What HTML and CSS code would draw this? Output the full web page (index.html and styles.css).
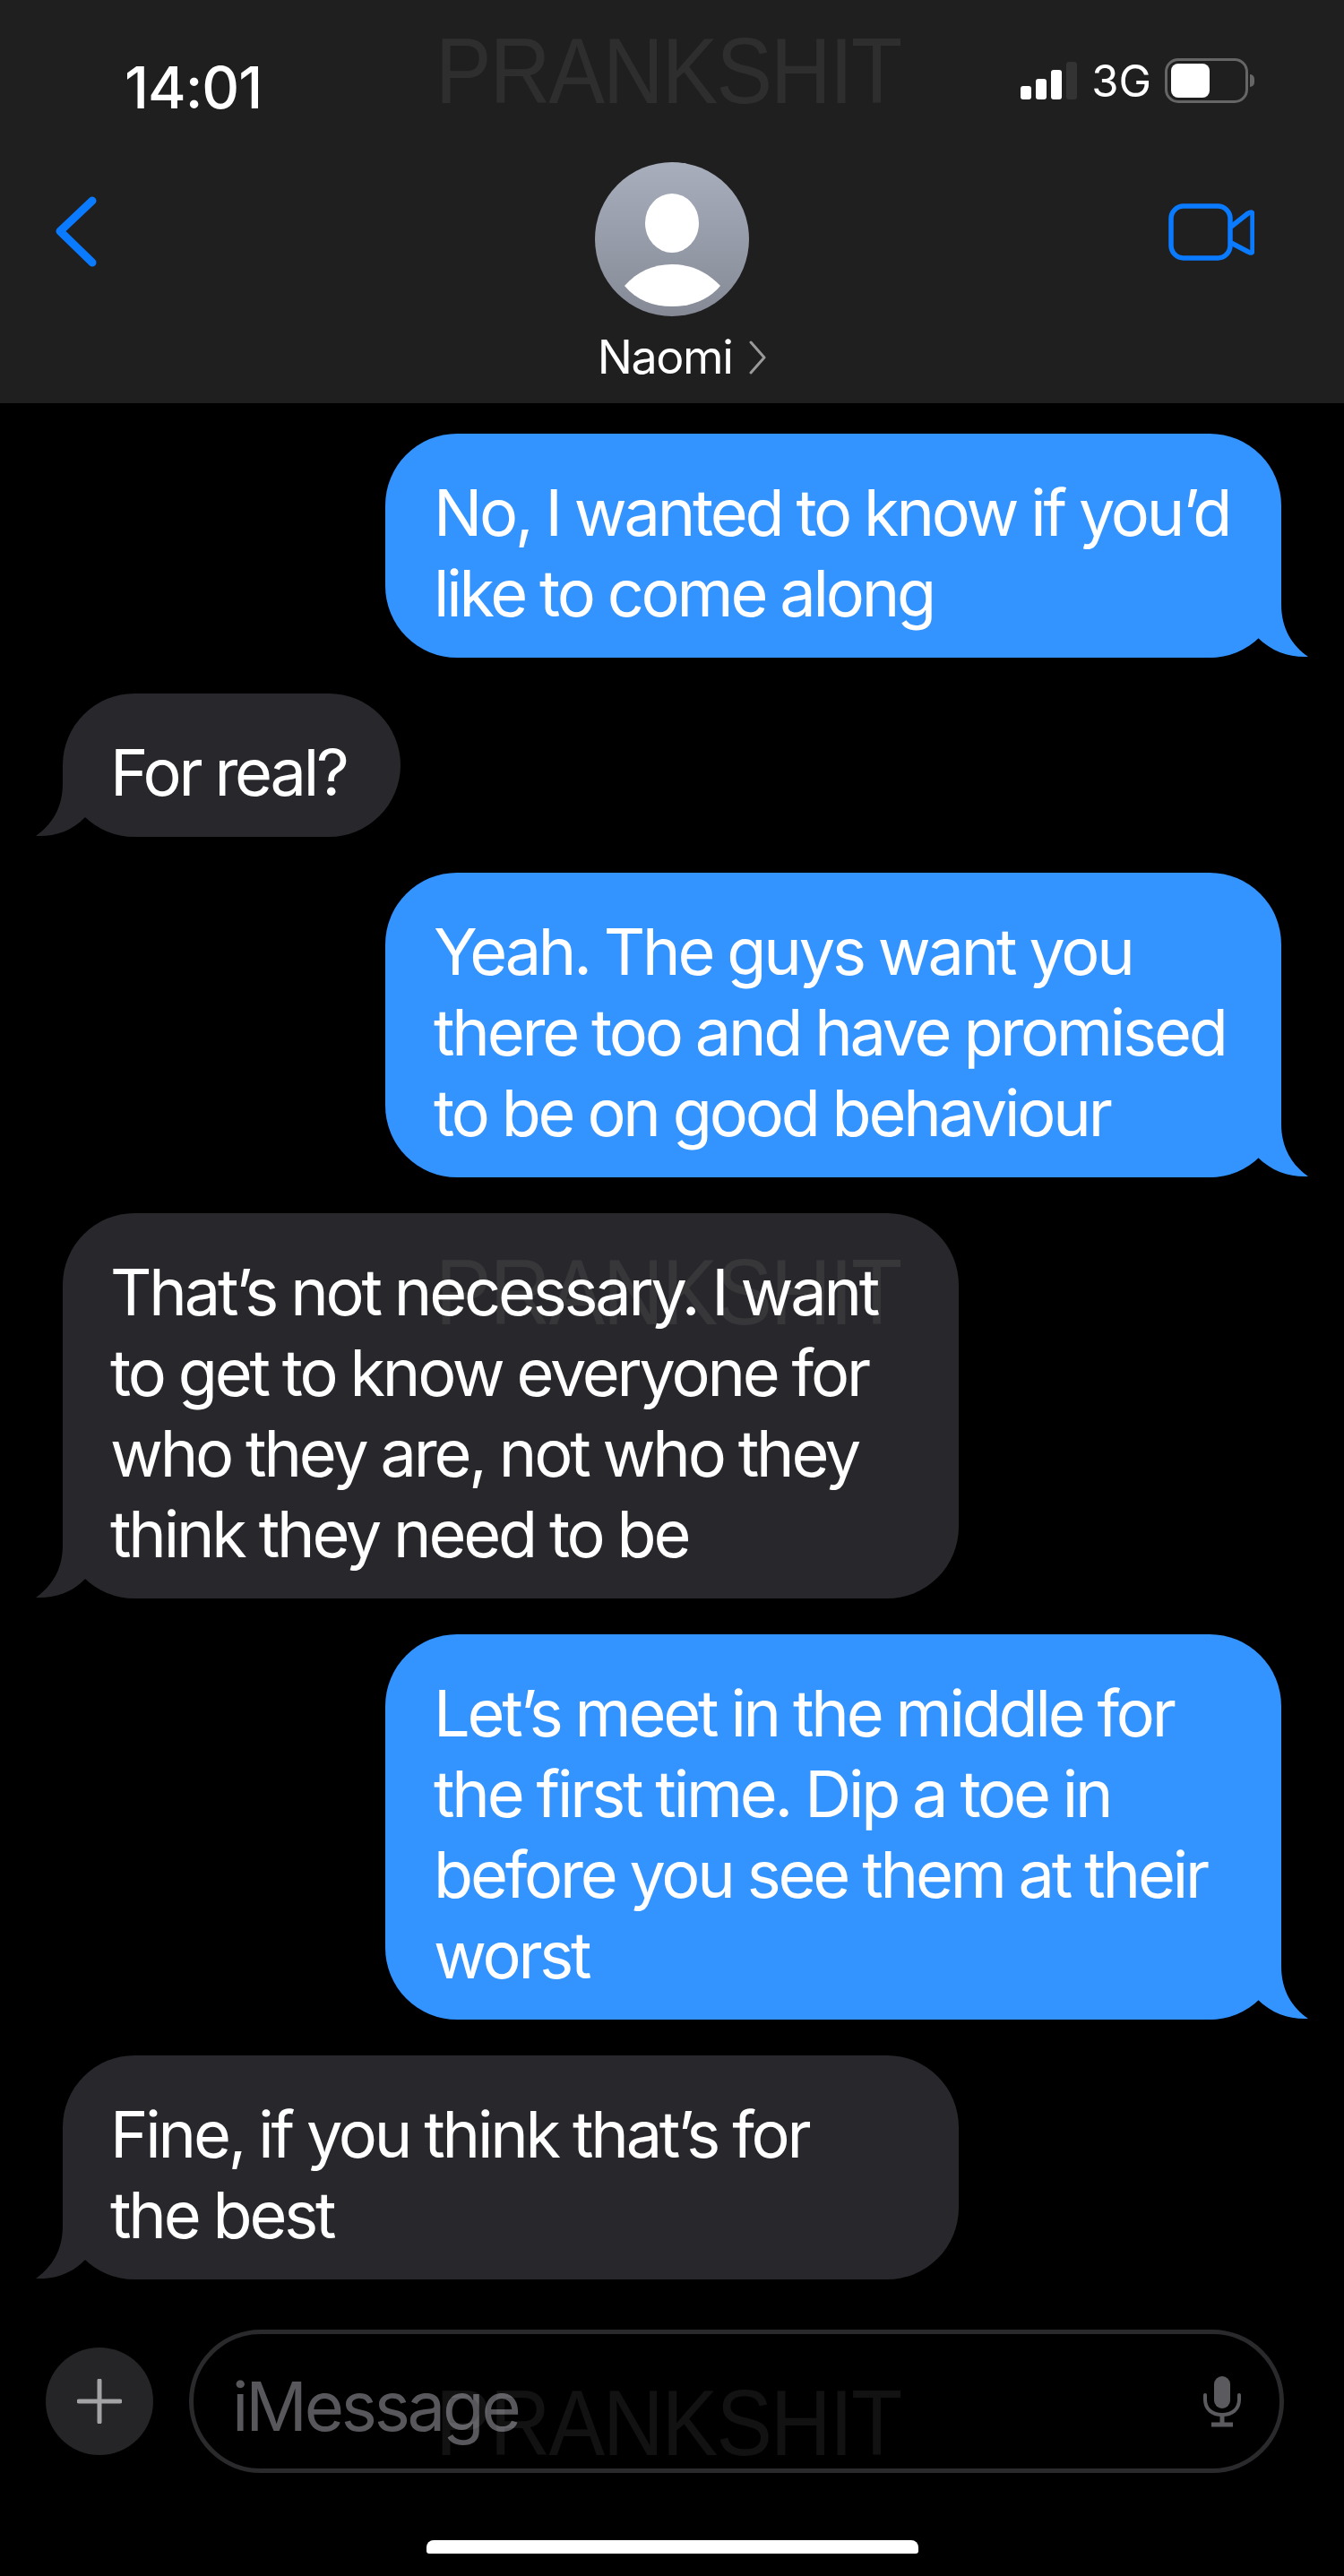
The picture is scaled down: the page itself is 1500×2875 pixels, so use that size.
FILE: index.html
```html
<!DOCTYPE html>
<html lang="en">
<head>
    <meta charset="UTF-8">
    <meta name="viewport" content="width=device-width, initial-scale=1.0">
    <title>Naomi</title>
    <link rel="stylesheet" href="styles.css">
</head>
<body>
<div class="phone">

    <header class="top">
        <div class="status">
            <span class="time">14:01</span>
            <div class="status-right">
                <div class="signal">
                    <i class="bar1"></i><i class="bar2"></i><i class="bar3"></i><i class="bar4"></i>
                </div>
                <span class="network">3G</span>
                <div class="battery"><div class="battery-fill"></div></div>
                <div class="battery-nub"></div>
            </div>
        </div>
        <div class="nav">
            <svg class="back" width="50" height="82" viewBox="0 0 50 82">
                <path d="M44 7 L8 41 L44 76" fill="none" stroke="#0a7aff" stroke-width="9" stroke-linecap="round" stroke-linejoin="round"/>
            </svg>
            <div class="contact">
                <svg class="avatar" width="174" height="174" viewBox="0 0 174 174">
                    <defs>
                        <linearGradient id="avatarGrad" x1="0" y1="0" x2="0" y2="1">
                            <stop offset="0" stop-color="#a9aebd"/>
                            <stop offset="1" stop-color="#858a96"/>
                        </linearGradient>
                    </defs>
                    <circle cx="87" cy="87" r="86" fill="url(#avatarGrad)"/>
                    <ellipse cx="87" cy="69" rx="30" ry="33" fill="#fff"/>
                    <path d="M34 139 C48 123 66 115 87 115 C108 115 126 123 141 139 C128 155 108 162 87 162 C66 162 47 155 34 139 Z" fill="#fff"/>
                </svg>
                <div class="name">
                    <span>Naomi</span>
                    <svg width="20" height="38" viewBox="0 0 20 38">
                        <path d="M2 2 L17 19 L2 36" fill="none" stroke="#9a9a9a" stroke-width="3" stroke-linecap="round" stroke-linejoin="round"/>
                    </svg>
                </div>
            </div>
            <svg class="video" width="96" height="64" viewBox="0 0 96 64">
                <rect x="3" y="3" width="66" height="58" rx="14" fill="none" stroke="#0a7aff" stroke-width="5.5"/>
                <path d="M70 26 L89 11 Q94 8 94 13 L94 52 Q94 57 89 54 L70 44" fill="none" stroke="#0a7aff" stroke-width="5.5" stroke-linejoin="round"/>
            </svg>
        </div>
    </header>

    <main class="messages">
        <div class="bubble sent">
            No, I wanted to know if you’d<br>like to come along
            <svg class="tail" width="120" height="80" viewBox="0 0 120 80"><path d="M0 0 L90 0 L90 20 C90 48 102 66 120 79 C100 80 80 74 63 57 C46 72 25 80 5 80 L0 80 Z"/></svg>
        </div>
        <div class="bubble received short">
            For real?
            <svg class="tail" width="120" height="80" viewBox="0 0 120 80"><path d="M120 0 L30 0 L30 20 C30 48 18 66 0 79 C20 80 40 74 55 58 C74 72 95 80 115 80 L120 80 Z"/></svg>
        </div>
        <div class="bubble sent">
            Yeah. The guys want you<br>there too and have promised<br>to be on good behaviour
            <svg class="tail" width="120" height="80" viewBox="0 0 120 80"><path d="M0 0 L90 0 L90 20 C90 48 102 66 120 79 C100 80 80 74 63 57 C46 72 25 80 5 80 L0 80 Z"/></svg>
        </div>
        <div class="bubble received">
            That’s not necessary. I want<br>to get to know everyone for<br>who they are, not who they<br>think they need to be
            <svg class="tail" width="120" height="80" viewBox="0 0 120 80"><path d="M120 0 L30 0 L30 20 C30 48 18 66 0 79 C20 80 40 74 55 58 C74 72 95 80 115 80 L120 80 Z"/></svg>
        </div>
        <div class="bubble sent">
            Let’s meet in the middle for<br>the first time. Dip a toe in<br>before you see them at their<br>worst
            <svg class="tail" width="120" height="80" viewBox="0 0 120 80"><path d="M0 0 L90 0 L90 20 C90 48 102 66 120 79 C100 80 80 74 63 57 C46 72 25 80 5 80 L0 80 Z"/></svg>
        </div>
        <div class="bubble received">
            Fine, if you think that’s for<br>the best
            <svg class="tail" width="120" height="80" viewBox="0 0 120 80"><path d="M120 0 L30 0 L30 20 C30 48 18 66 0 79 C20 80 40 74 55 58 C74 72 95 80 115 80 L120 80 Z"/></svg>
        </div>
    </main>

    <footer class="composer">
        <div class="plus">
            <svg width="50" height="50" viewBox="0 0 50 50">
                <path d="M25 2 V48 M2 25 H48" stroke="#a3a3a5" stroke-width="5" stroke-linecap="round"/>
            </svg>
        </div>
        <div class="input">
            <span>iMessage</span>
            <svg width="44" height="58" viewBox="0 0 44 58">
                <rect x="13" y="1" width="18" height="36" rx="9" fill="#5b5b5f"/>
                <path d="M3 22 V27 C3 38 11 44 22 44 C33 44 41 38 41 27 V22" fill="none" stroke="#5b5b5f" stroke-width="4" stroke-linecap="round"/>
                <path d="M22 44 V53 M10 55 H34" stroke="#5b5b5f" stroke-width="5"/>
            </svg>
        </div>
    </footer>

    <div class="home-bar"></div>

    <div class="watermark wm-top">PRANKSHIT</div>
    <div class="watermark wm-mid">PRANKSHIT</div>
    <div class="watermark wm-bottom">PRANKSHIT</div>
</div>
</body>
</html>
```

FILE: styles.css
```css
body {
    margin: 0;
    background-color: #000;
    color: #fff;
    font-family: Inter, 'Liberation Sans', sans-serif;
}

.phone {
    position: relative;
    width: 1500px;
    height: 2875px;
    overflow: hidden;
}

/* header */
.top {
    height: 450px;
    box-sizing: border-box;
    background-color: #1f1f1f;
    padding-top: 60px;
}

.status {
    display: flex;
    justify-content: space-between;
    height: 120px;
    padding: 0 100px 0 139px;
}

.time {
    font-size: 65px;
    font-weight: 500;
    letter-spacing: -1px;
    line-height: 76px;
}

.status-right {
    display: flex;
    align-items: flex-start;
    padding-top: 5px;
}

.signal {
    display: flex;
    align-items: flex-end;
    gap: 5px;
    height: 42px;
    margin-top: 4px;
}

.signal i {
    display: block;
    width: 12px;
    background-color: #fff;
    border-radius: 3px;
}

.signal .bar1 { height: 15px; }
.signal .bar2 { height: 23px; }
.signal .bar3 { height: 33px; }
.signal .bar4 { height: 42px; background-color: #333; }

.network {
    font-size: 49px;
    line-height: 50px;
    margin: 1px 15px 0 16px;
}

.battery {
    box-sizing: border-box;
    width: 93px;
    height: 50px;
    border: 3px solid #666;
    border-radius: 15px;
    padding: 3px 4px;
}

.battery-fill {
    width: 43px;
    height: 38px;
    background-color: #fff;
    border-radius: 8px;
}

.battery-nub {
    width: 5px;
    height: 14px;
    margin: 18px 0 0 2px;
    background-color: #666;
    border-radius: 0 7px 7px 0;
}

.nav {
    display: grid;
    grid-template-columns: 1fr 174px 1fr;
}

.back {
    margin: 37px 0 0 59px;
}

.contact {
    display: flex;
    flex-direction: column;
    align-items: center;
}

.video {
    justify-self: end;
    margin: 47px 100px 0 0;
}

.avatar {
    display: block;
}

.name {
    display: flex;
    align-items: center;
    gap: 19px;
    margin-top: 14px;
    margin-left: 23px;
    font-size: 52px;
    line-height: 62px;
    letter-spacing: -1.4px;
}

/* chat */
.messages {
    display: flex;
    flex-direction: column;
    gap: 40px;
    padding: 34px 70px 0;
}

.bubble {
    position: relative;
    isolation: isolate;
    box-sizing: border-box;
    width: 1000px;
    padding: 43px 55px 27px 53px;
    border-radius: 80px;
    font-size: 72px;
    line-height: 90px;
    letter-spacing: -3.2px;
    word-spacing: -1px;
    white-space: nowrap;
}

.bubble.sent {
    padding-left: 54px;
}

.bubble.short {
    width: fit-content;
    padding-right: 60px;
}

.sent {
    align-self: flex-end;
    background-color: #3393ff;
}

.received {
    align-self: flex-start;
    background-color: #28282c;
}

.tail {
    position: absolute;
    bottom: 0;
    z-index: -1;
}

.sent .tail {
    right: -30px;
    fill: #3393ff;
}

.received .tail {
    left: -30px;
    fill: #28282c;
}

/* bottom bar */
.composer {
    display: flex;
    align-items: center;
    gap: 40px;
    margin-top: 56px;
    padding: 0 67px 0 51px;
}

.plus {
    display: flex;
    align-items: center;
    justify-content: center;
    flex: none;
    width: 120px;
    height: 120px;
    background-color: #252528;
    border-radius: 50%;
}

.input {
    display: flex;
    align-items: center;
    justify-content: space-between;
    flex: 1;
    box-sizing: border-box;
    height: 160px;
    padding: 0 42px 0 43px;
    border: 5px solid #2a2a2c;
    border-radius: 80px;
    color: #58585c;
    font-size: 76px;
    letter-spacing: -3.2px;
}

.input span {
    margin-top: 10px;
}

.home-bar {
    width: 549px;
    height: 15px;
    margin: 75px auto 0;
    background-color: #fff;
    border-radius: 8px 8px 3px 3px;
}

/* watermark over everything */
.watermark {
    position: absolute;
    left: 486px;
    font-family: 'Liberation Sans', sans-serif;
    font-size: 104px;
    line-height: 100px;
    letter-spacing: -2px;
    color: rgba(255, 255, 255, 0.07);
    transform: scaleX(0.9);
    transform-origin: left;
    pointer-events: none;
}

.wm-top { top: 29px; }
.wm-mid { top: 1392px; }
.wm-bottom { top: 2654px; }
```
